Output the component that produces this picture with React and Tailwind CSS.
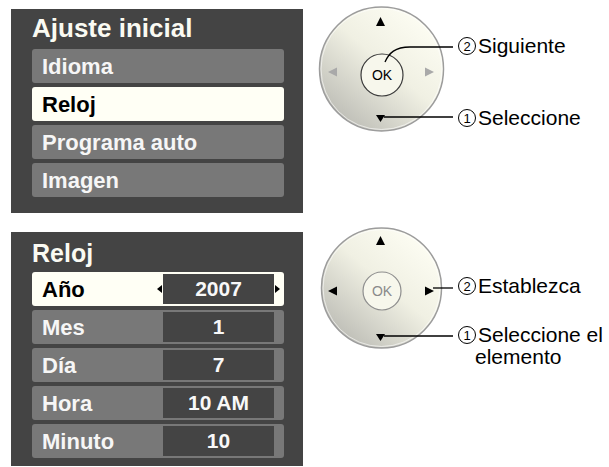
import React from "react";

const Circled = ({ n }) => (
  <span className="inline-flex items-center justify-center w-[18px] h-[18px] rounded-full border border-black text-[13px] leading-none mr-[2px]">
    {n}
  </span>
);

const MenuRow = ({ label, active }) => (
  <div
    className={`h-[34px] rounded-[3px] pl-[10px] flex items-center text-[22px] font-bold ${
      active ? "bg-[#fffff5] text-black" : "bg-[#787878] text-[#f6f6f6]"
    }`}
  >
    {label}
  </div>
);

const ClockRow = ({ label, value, active }) => (
  <div
    className={`h-[34px] rounded-[3px] pl-[10px] flex items-center font-bold ${
      active ? "bg-[#fffff5] text-black" : "bg-[#787878] text-[#f6f6f6]"
    }`}
  >
    <span className="flex-1 text-[22px]">{label}</span>
    <span className="w-[6px] flex items-center">
      {active && <span className="w-0 h-0 border-y-[4px] border-y-transparent border-r-[5px] border-r-black" />}
    </span>
    <span className="w-[111px] h-[30px] bg-[#444444] text-[#f8f8f8] text-[21px] flex items-center justify-center">
      {value}
    </span>
    <span className="w-[10px] flex items-center pl-[1px]">
      {active && <span className="w-0 h-0 border-y-[4px] border-y-transparent border-l-[5px] border-l-black" />}
    </span>
  </div>
);

const Dial = ({ id, cy, r, ok, okR, okActive, sideActive, lines }) => (
  <svg width="137" height="130" viewBox="0 0 137 130" className="shrink-0">
    <defs>
      <linearGradient id={id} x1="0.85" y1="0.1" x2="0.15" y2="0.92">
        <stop offset="0" stopColor="#fdfdf3" />
        <stop offset="0.45" stopColor="#f0f0e3" />
        <stop offset="1" stopColor="#bcbcb5" />
      </linearGradient>
    </defs>
    <circle cx="63.5" cy={cy} r={r} fill={`url(#${id})`} stroke="#9c9c9c" strokeWidth="1.5" />
    <circle cx="63.5" cy={cy} r={r - 1.5} fill="none" stroke="#ffffff" strokeOpacity="0.6" strokeWidth="1" />
    <circle
      cx="64"
      cy={ok}
      r={okR}
      fill="#f7f7ec"
      stroke={okActive ? "#3a3a3a" : "#8e8e8e"}
      strokeWidth="1.2"
    />
    <text
      x="64"
      y={ok + 5}
      textAnchor="middle"
      fontSize="14"
      fontFamily="Liberation Sans, Arial, sans-serif"
      fill={okActive ? "#000" : "#8a8a8a"}
    >
      OK
    </text>
    <polygon points={`58,${cy - 43} 67,${cy - 43} 62.5,${cy - 52}`} fill="#000" />
    <polygon points={`58,${cy + 46} 67,${cy + 46} 62.5,${cy + 53}`} fill="#000" />
    <polygon
      points={`10,${cy + 3} 19,${cy - 1.5} 19,${cy + 7.5}`}
      fill={sideActive ? "#000" : "#a9a9a9"}
    />
    <polygon
      points={`116,${cy + 3} 107,${cy - 1.5} 107,${cy + 7.5}`}
      fill={sideActive ? "#000" : "#a9a9a9"}
    />
    {lines.map((d, i) => (
      <path key={i} d={d} fill="none" stroke="#000" strokeWidth="1.3" />
    ))}
  </svg>
);

const Label = ({ n, children }) => (
  <div className="flex items-center h-[22px] text-[21px] leading-[22px] text-black">
    <Circled n={n} />
    <span>{children}</span>
  </div>
);

export default function App() {
  return (
    <div className="w-[609px] h-[467px] bg-white overflow-hidden font-['Liberation_Sans',Arial,sans-serif] pt-[5px]">
      {/* Ajuste inicial */}
      <div className="flex items-start">
        <div className="mt-[4px] ml-[11px] w-[292px] h-[204px] bg-[#444444] pt-[4px] pl-[21px] pr-[19px]">
          <div className="text-[26px] leading-[30px] font-bold text-[#fafaf2] mb-[6px]">Ajuste inicial</div>
          <div className="flex flex-col gap-[4px]">
            <MenuRow label="Idioma" />
            <MenuRow label="Reloj" active />
            <MenuRow label="Programa auto" />
            <MenuRow label="Imagen" />
          </div>
        </div>
        <div className="ml-[15px] flex">
          <Dial
            id="dialA"
            cy={64}
            r={62}
            ok={70}
            okR={21}
            okActive
            lines={["M67 57 C 71 48, 77 42, 92 42 L 135 42", "M66 112 L 135 112"]}
          />
          <div className="ml-[3px] pt-[30px]">
            <Label n="2">Siguiente</Label>
            <div className="mt-[50px]">
              <Label n="1">Seleccione</Label>
            </div>
          </div>
        </div>
      </div>

      {/* Reloj */}
      <div className="flex items-start mt-[14px]">
        <div className="mt-[5px] ml-[11px] w-[292px] h-[234px] bg-[#444444] pt-[6px] pl-[21px] pr-[19px]">
          <div className="text-[25px] leading-[30px] font-bold text-[#fafaf2] mb-[4px]">Reloj</div>
          <div className="flex flex-col gap-[4px]">
            <ClockRow label="Año" value="2007" active />
            <ClockRow label="Mes" value="1" />
            <ClockRow label="Día" value="7" />
            <ClockRow label="Hora" value="10 AM" />
            <ClockRow label="Minuto" value="10" />
          </div>
        </div>
        <div className="ml-[15px] flex">
          <Dial
            id="dialB"
            cy={61}
            r={60}
            ok={64}
            okR={19}
            sideActive
            lines={["M115 61 L 135 61", "M66 109 L 135 109"]}
          />
          <div className="ml-[3px] pt-[48px]">
            <Label n="2">Establezca</Label>
            <div className="mt-[27px]">
              <Label n="1">Seleccione el</Label>
              <div className="pl-[17px] text-[21px] leading-[22px] text-black">elemento</div>
            </div>
          </div>
        </div>
      </div>
    </div>
  );
}
